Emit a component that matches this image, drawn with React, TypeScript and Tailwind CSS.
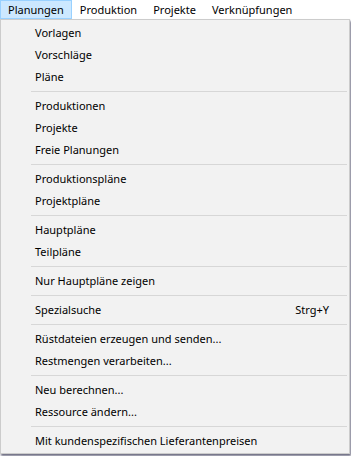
import React from 'react';

type Entry = { label: string; shortcut?: string } | 'sep';

const topMenus = ['Planungen', 'Produktion', 'Projekte', 'Verknüpfungen'];

const entries: Entry[] = [
  { label: 'Vorlagen' },
  { label: 'Vorschläge' },
  { label: 'Pläne' },
  'sep',
  { label: 'Produktionen' },
  { label: 'Projekte' },
  { label: 'Freie Planungen' },
  'sep',
  { label: 'Produktionspläne' },
  { label: 'Projektpläne' },
  'sep',
  { label: 'Hauptpläne' },
  { label: 'Teilpläne' },
  'sep',
  { label: 'Nur Hauptpläne zeigen' },
  'sep',
  { label: 'Spezialsuche', shortcut: 'Strg+Y' },
  'sep',
  { label: 'Rüstdateien erzeugen und senden...' },
  { label: 'Restmengen verarbeiten...' },
  'sep',
  { label: 'Neu berechnen...' },
  { label: 'Ressource ändern...' },
  'sep',
  { label: 'Mit kundenspezifischen Lieferantenpreisen' },
];

export default function App() {
  return (
    <div
      className="w-[351px] h-[456px] bg-white overflow-hidden text-[11px] text-black"
      style={{ fontFamily: '"Segoe UI", "Noto Sans", sans-serif' }}
    >
      {/* Menu bar */}
      <div className="flex h-[19px] items-stretch bg-white">
        {topMenus.map((m, i) => (
          <div
            key={m}
            className={`flex items-center px-[7px] leading-none ${
              i === 0 ? 'bg-[#cce8ff] border border-[#99d1ff]' : 'border border-transparent'
            }`}
          >
            {m}
          </div>
        ))}
      </div>

      {/* Dropdown */}
      <div className="w-[350px] bg-[#f2f2f2] border border-[#cccccc] pt-[2px] pb-[1px] shadow-[1px_2px_2px_rgba(50,50,80,0.7)]">
        {entries.map((e, i) =>
          e === 'sep' ? (
            <div key={i} className="h-[7px] flex items-center pl-[30px] pr-[2px]">
              <div className="h-px w-full bg-[#d7d7d7]" />
            </div>
          ) : (
            <div key={i} className="h-[22px] flex items-center pl-[34px] pr-[20px] justify-between">
              <span>{e.label}</span>
              {e.shortcut && <span>{e.shortcut}</span>}
            </div>
          )
        )}
      </div>
    </div>
  );
}
